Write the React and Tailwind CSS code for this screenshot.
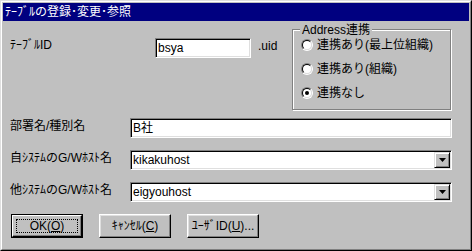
const FONT = "font-['Liberation_Sans','Noto_Sans_CJK_JP',sans-serif]";

// sunken 3D edit frame
const sunken =
  "border border-t-[#808080] border-l-[#808080] border-r-white border-b-white shadow-[inset_1px_1px_0_#000,inset_-1px_-1px_0_#dfdfdf] bg-white";

function Radio({ checked, label }) {
  return (
    <div className="flex items-center h-[24px]">
      <div className="w-[12px] h-[12px] rounded-full border border-t-[#808080] border-l-[#808080] border-r-white border-b-white">
        <div className="w-full h-full rounded-full border border-t-black border-l-black border-r-[#dfdfdf] border-b-[#dfdfdf] bg-white flex items-center justify-center">
          {checked && <div className="w-[4px] h-[4px] rounded-full bg-black" />}
        </div>
      </div>
      <span className="ml-[4px] leading-[14px]">{label}</span>
    </div>
  );
}

function Combo({ value }) {
  return (
    <div className={`w-[322px] h-[20px] flex items-center ${sunken}`}>
      <span className="flex-1 pl-[2px] leading-[14px]">{value}</span>
      <div className="w-[16px] h-[16px] mr-[1px] bg-[#c0c0c0] border border-t-[#dfdfdf] border-l-[#dfdfdf] border-r-black border-b-black shadow-[inset_1px_1px_0_#fff,inset_-1px_-1px_0_#808080] flex items-center justify-center">
        <svg width="7" height="4" viewBox="0 0 7 4">
          <polygon points="0,0 7,0 3.5,4" fill="#000" />
        </svg>
      </div>
    </div>
  );
}

function Button({ children, isDefault }) {
  if (isDefault) {
    return (
      <div className="w-[72px] h-[24px] border border-black">
        <div className="w-full h-full bg-[#c0c0c0] border border-t-white border-l-white border-r-black border-b-black shadow-[inset_-1px_-1px_0_#808080] flex items-center justify-center p-[3px]">
          <div className="w-full h-full border border-dotted border-black flex items-center justify-center leading-[14px]">
            {children}
          </div>
        </div>
      </div>
    );
  }
  return (
    <div className="w-[72px] h-[24px] bg-[#c0c0c0] border border-t-white border-l-white border-r-black border-b-black shadow-[inset_-1px_-1px_0_#808080,inset_1px_1px_0_#dfdfdf] flex items-center justify-center leading-[14px]">
      {children}
    </div>
  );
}

export default function App() {
  return (
    <div className={`w-[472px] h-[251px] bg-[#c0c0c0] text-black text-[12px] ${FONT} border border-t-[#dfdfdf] border-l-[#dfdfdf] border-r-black border-b-black`}>
      <div className="h-full border border-t-white border-l-white border-r-[#808080] border-b-[#808080] p-[1px] flex flex-col">
        {/* Title bar */}
        <div className="h-[18px] bg-[#000080] text-white flex items-center pl-[2px] leading-[14px]">
          ﾃｰﾌﾞﾙの登録･変更･参照
        </div>

        {/* Top section */}
        <div className="h-[97px] flex items-start">
          <div className="pl-[7px] pt-[17px] flex items-start">
            <span className="w-[145px] leading-[14px]">ﾃｰﾌﾞﾙID</span>
            <div className={`w-[96px] h-[20px] flex items-center ${sunken}`}>
              <span className="pl-[2px] leading-[14px]">bsya</span>
            </div>
            <span className="ml-[7px] mt-[1px] leading-[14px]">.uid</span>
          </div>

          <div className="ml-auto mr-[18px] mt-[8px] relative w-[159px] h-[81px] border border-[#808080] shadow-[inset_1px_1px_0_#fff,1px_1px_0_#fff] pt-[3px] pl-[8px]">
            <span className="absolute top-[-7px] left-[7px] px-[2px] bg-[#c0c0c0] leading-[14px]">
              Address連携
            </span>
            <Radio label="連携あり(最上位組織)" />
            <Radio label="連携あり(組織)" />
            <Radio label="連携なし" checked />
          </div>
        </div>

        {/* Field rows */}
        <div className="flex flex-col gap-[12px] pl-[7px]">
          <div className="flex items-start">
            <span className="w-[120px] mt-[1px] leading-[14px]">部署名/種別名</span>
            <div className={`w-[322px] h-[20px] flex items-center ${sunken}`}>
              <span className="pl-[2px] leading-[14px]">B社</span>
            </div>
          </div>
          <div className="flex items-start">
            <span className="w-[120px] mt-[1px] leading-[14px]">自ｼｽﾃﾑのG/Wﾎｽﾄ名</span>
            <Combo value="kikakuhost" />
          </div>
          <div className="flex items-start">
            <span className="w-[120px] mt-[1px] leading-[14px]">他ｼｽﾃﾑのG/Wﾎｽﾄ名</span>
            <Combo value="eigyouhost" />
          </div>

          {/* Buttons */}
          <div className="flex gap-[16px] ml-[1px]">
            <Button isDefault>
              OK(<u>O</u>)
            </Button>
            <Button>
              ｷｬﾝｾﾙ(<u>C</u>)
            </Button>
            <Button>
              ﾕｰｻﾞID(<u>U</u>)...
            </Button>
          </div>
        </div>
      </div>
    </div>
  );
}
